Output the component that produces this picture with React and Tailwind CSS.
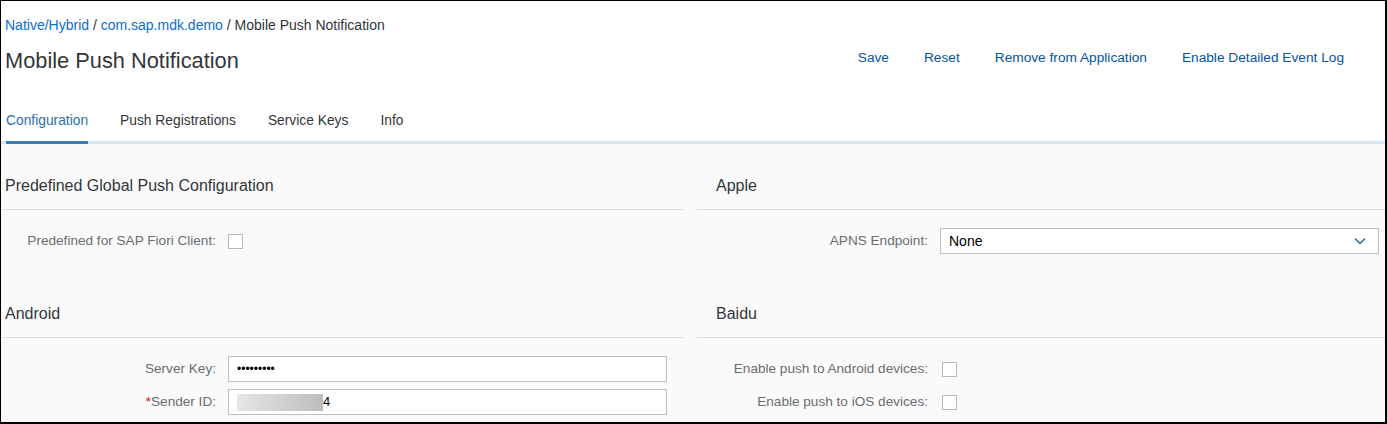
import React from 'react';

const font = { fontFamily: '"Liberation Sans", Arial, sans-serif' };

const Checkbox = () => (
    <div className="w-[15px] h-[15px] border border-[#b8b8b8] bg-white" />
);

const SectionHeader = ({ title, right }) => (
    <div className={`${right ? 'pl-[19px]' : 'pl-[4px]'} pt-[32px] pb-[13px] border-b border-[#d9d9d9] text-[16px] leading-[20px] text-[#32363a]`}>
        {title}
    </div>
);

const FieldRow = ({ label, labelWidth, required, children }) => (
    <div className="flex items-center h-[26px]">
        <div className={`${labelWidth} text-right text-[13.6px] text-[#6a6d70] shrink-0`}>
            {required && <span className="text-[#e00000]">*</span>}
            {label}:
        </div>
        <div className="ml-3 flex items-center">{children}</div>
    </div>
);

const App = () => {
    const tabs = ['Configuration', 'Push Registrations', 'Service Keys', 'Info'];
    const actions = ['Save', 'Reset', 'Remove from Application', 'Enable Detailed Event Log'];

    return (
        <div style={font} className="w-[1387px] h-[424px] overflow-hidden border-l border-t border-r-2 border-b-2 border-black bg-white">
            {/* Header */}
            <div className="pl-[4px] pt-[15px]">
                <div className="text-[14px] leading-[18px] text-[#32363a]">
                    <span className="text-[#0a6ed1]">Native/Hybrid</span>
                    <span> / </span>
                    <span className="text-[#0a6ed1]">com.sap.mdk.demo</span>
                    <span> / Mobile Push Notification</span>
                </div>
                <div className="flex items-start justify-between mt-[13px]">
                    <h1 className="text-[21.8px] leading-[28px] text-[#32363a]">Mobile Push Notification</h1>
                    <div className="flex pt-[1px] pr-[41px] text-[13.7px] leading-[20px] text-[#0854a0]">
                        {actions.map((a, i) => (
                            <span key={a} className={i === 0 ? '' : 'ml-[35px]'}>{a}</span>
                        ))}
                    </div>
                </div>
            </div>

            {/* Tabs */}
            <div className="flex mt-[25px] pl-[5px] border-b-[3px] border-[#d8e6f3]">
                {tabs.map((t, i) => (
                    <div
                        key={t}
                        className={`h-[44px] leading-[42px] text-[13.8px] -mb-[3px] border-b-[3px] ${i === 0 ? 'border-[#3a7fb8] text-[#2a6fae]' : 'border-transparent text-[#32363a]'} ${i === 0 ? '' : 'ml-[32px]'}`}
                    >
                        {t}
                    </div>
                ))}
            </div>

            {/* Content */}
            <div className="bg-[#fafafa] h-full">
                <div className="grid grid-cols-[682px_688px] gap-x-[14px]">
                    <SectionHeader title="Predefined Global Push Configuration" />
                    <SectionHeader title="Apple" right />

                    <div className="h-[62px] flex items-center">
                        <FieldRow label="Predefined for SAP Fiori Client" labelWidth="w-[215px]">
                            <Checkbox />
                        </FieldRow>
                    </div>
                    <div className="h-[62px] flex items-center">
                        <FieldRow label="APNS Endpoint" labelWidth="w-[231px]">
                            <div className="w-[439px] h-[26px] bg-white border border-[#bfbfbf] flex items-center justify-between pl-[8px] pr-[12px]">
                                <span className="text-[14px] text-[#000]">None</span>
                                <svg width="12" height="8" viewBox="0 0 12 8">
                                    <path d="M1 1.5 L6 6.5 L11 1.5" stroke="#346187" strokeWidth="1.4" fill="none" />
                                </svg>
                            </div>
                        </FieldRow>
                    </div>

                    <SectionHeader title="Android" />
                    <SectionHeader title="Baidu" right />

                    <div className="pt-[18px] flex flex-col gap-[7px]">
                        <FieldRow label="Server Key" labelWidth="w-[215px]">
                            <input
                                type="password"
                                readOnly
                                value="123456789"
                                className="w-[439px] h-[26px] bg-white border border-[#bfbfbf] pl-[8px] text-[12px] text-black outline-none"
                            />
                        </FieldRow>
                        <FieldRow label="Sender ID" labelWidth="w-[215px]" required>
                            <div className="w-[439px] h-[26px] bg-white border border-[#bfbfbf] flex items-center pl-[8px] text-[13px] text-black">
                                <div className="w-[86px] h-[17px] bg-gradient-to-r from-[#e6e6e6] to-[#bdbdbd]" />
                                <span>4</span>
                            </div>
                        </FieldRow>
                    </div>
                    <div className="pt-[18px] flex flex-col gap-[7px]">
                        <FieldRow label="Enable push to Android devices" labelWidth="w-[231px]">
                            <div className="ml-[2px]"><Checkbox /></div>
                        </FieldRow>
                        <FieldRow label="Enable push to iOS devices" labelWidth="w-[231px]">
                            <div className="ml-[2px]"><Checkbox /></div>
                        </FieldRow>
                    </div>
                </div>
            </div>
        </div>
    );
};

export default App;
